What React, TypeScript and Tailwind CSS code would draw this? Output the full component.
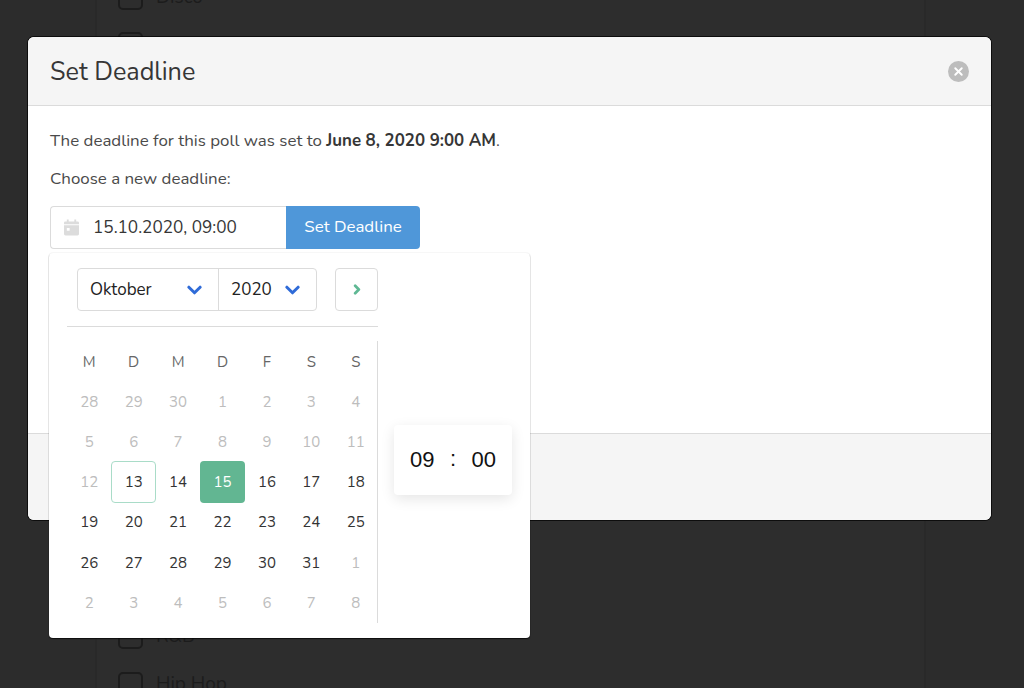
import React from 'react';
import { X } from 'lucide-react';

const weekDays = ['M', 'D', 'M', 'D', 'F', 'S', 'S'];

// [label, muted]
const days: [number, boolean][] = [
  [28, true], [29, true], [30, true], [1, true], [2, true], [3, true], [4, true],
  [5, true], [6, true], [7, true], [8, true], [9, true], [10, true], [11, true],
  [12, true], [13, false], [14, false], [15, false], [16, false], [17, false], [18, false],
  [19, false], [20, false], [21, false], [22, false], [23, false], [24, false], [25, false],
  [26, false], [27, false], [28, false], [29, false], [30, false], [31, false], [1, true],
  [2, true], [3, true], [4, true], [5, true], [6, true], [7, true], [8, true],
];

function Chevron({ className }: { className: string }) {
  return (
    <svg viewBox="0 0 16 10" className={className} fill="none" stroke="currentColor" strokeWidth="3.2" strokeLinecap="round" strokeLinejoin="round">
      <path d="M2 2l6 6 6-6" />
    </svg>
  );
}

function CalendarIcon() {
  return (
    <svg viewBox="0 0 16 17" className="w-[15px] h-[17px] text-[#dcdcdc]" fill="currentColor">
      <path d="M3 0h2v2h6V0h2v2h1.5A1.5 1.5 0 0 1 16 3.500V5H0V3.500A1.500 1.500 0 0 1 1.500 2H3z" />
      <path fillRule="evenodd" d="M0 6h16v9.500a1.500 1.500 0 0 1-1.500 1.500h-13A1.500 1.500 0 0 1 0 15.500zM3 9v3h3V9z" />
    </svg>
  );
}

function ListRow({ label }: { label?: string }) {
  return (
    <div className="flex items-center gap-[13px] h-[25px] leading-[25px]">
      <span className="w-[25px] h-[25px] rounded-[5px] border-2 border-[#1c1c1c]" />
      {label && <span>{label}</span>}
    </div>
  );
}

function Background() {
  return (
    <div className="ml-[95px] mr-[98px] h-full border-x-2 border-[#292929] bg-[#2d2d2d] pl-[21px] flex flex-col justify-between text-[#1c1c1c] text-[19px]">
      <div className="flex flex-col gap-[22px] -mt-[15px]">
        <ListRow label="Disco" />
        <ListRow />
      </div>
      <div className="flex flex-col gap-[23px] -mb-[9px]">
        <ListRow label="R&B" />
        <ListRow label="Hip Hop" />
      </div>
    </div>
  );
}

function DatePicker() {
  return (
    <div className="absolute left-[21px] top-[216px] w-[481px] h-[385px] bg-white rounded-[4px] shadow-[0_1px_1px_rgba(0,0,0,0.7),0_0_0_1px_rgba(0,0,0,0.03)] flex">
      <div className="w-[329px] pl-[18px] pt-[15px] shrink-0">
        <div className="pl-[10px] flex h-[43px]">
          <div className="flex w-[240px] rounded-[4px] border border-[#dbdbdb]">
            <div className="w-[141px] border-r border-[#dbdbdb] flex items-center justify-between pl-[12px] pr-[16px] text-[17px] text-[#222]">
              <span>Oktober</span>
              <Chevron className="w-[15px] h-[10px] text-[#2f6bd8]" />
            </div>
            <div className="flex-1 flex items-center justify-between pl-[12px] pr-[16px] text-[17px] text-[#222]">
              <span>2020</span>
              <Chevron className="w-[15px] h-[10px] text-[#2f6bd8]" />
            </div>
          </div>
          <div className="ml-[18px] w-[43px] rounded-[4px] border border-[#dbdbdb] flex items-center justify-center">
            <svg viewBox="0 0 8 12" className="w-[8px] h-[11px] text-[#5fb894]" fill="none" stroke="currentColor" strokeWidth="3" strokeLinecap="round" strokeLinejoin="round">
              <path d="M2 2l4 4-4 4" />
            </svg>
          </div>
        </div>
        <div className="mt-[15px] border-t border-[#dbdbdb] w-[311px]" />
        <div className="mt-[14px] w-[311px] h-[282px] pt-[1px] border-r border-[#dbdbdb] text-[15px]">
          <div className="grid grid-cols-7 w-[311px] text-[#666] h-[40px] items-center">
            {weekDays.map((d, i) => (
              <span key={i} className="text-center">{d}</span>
            ))}
          </div>
          <div className="grid grid-cols-7 w-[311px] auto-rows-[40.2px]">
            {days.map(([d, muted], i) => (
              <div
                key={i}
                className={
                  'flex items-center justify-center rounded-[4px] ' +
                  (muted ? 'text-[#bdbdbd] ' : 'text-[#333] ') +
                  (i === 15 ? 'border border-[#a9dcc8] -mt-[1px] ' : '') +
                  (i === 17 ? 'bg-[#62b692] text-white -mt-[1px] ' : '')
                }
              >
                {d}
              </div>
            ))}
          </div>
        </div>
      </div>
      <div className="ml-[16px] mt-[172px] w-[118px] h-[70px] pb-[2px] rounded-[4px] bg-white shadow-[0_4px_14px_rgba(0,0,0,0.1)] flex items-center justify-center gap-[15.5px] font-['Liberation_Sans',sans-serif] text-[22px] text-[#111]">
        <span>09</span>
        <span className="-mt-[2px]">:</span>
        <span>00</span>
      </div>
    </div>
  );
}

export default function App() {
  return (
    <div className="relative w-[1024px] h-[688px] overflow-hidden bg-[#2c2c2c] font-['Nunito','Lato',sans-serif]">
      <Background />
      <div className="absolute left-[28px] top-[37px] w-[963px] h-[483px] rounded-[6px] bg-white shadow-[0_0_0_1px_rgba(0,0,0,0.7)] flex flex-col">
        <div className="h-[69px] shrink-0 rounded-t-[6px] bg-[#f5f5f5] border-b border-[#dbdbdb] flex items-center justify-between pl-[22px] pr-[22px]">
          <h1 className="text-[25.2px] pt-[4px] text-[#363636]">Set Deadline</h1>
          <div className="w-[21px] h-[21px] rounded-full bg-[#bdbdbd] flex items-center justify-center">
            <X className="w-[13px] h-[13px] text-white" strokeWidth={3.5} />
          </div>
        </div>
        <div className="flex-1 px-[22px] pt-[24px] text-[16.9px] text-[#4a4a4a]">
          <p className="leading-[22px]">
            The deadline for this poll was set to <strong className="font-bold text-[#363636]">June 8, 2020 9:00 AM</strong>.
          </p>
          <p className="mt-[16px] leading-[22px]">Choose a new deadline:</p>
          <div className="mt-[16px] flex h-[43px] w-[370px]">
            <div className="w-[236px] rounded-l-[4px] border border-[#dbdbdb] border-r-0 flex items-center pl-[13px] text-[#363636]">
              <CalendarIcon />
              <span className="ml-[14px] text-[17.2px]">15.10.2020, 09:00</span>
            </div>
            <div className="flex-1 rounded-r-[4px] bg-[#4f97d9] text-white flex items-center justify-center pb-[2px]">Set Deadline</div>
          </div>
        </div>
        <div className="h-[87px] shrink-0 rounded-b-[6px] bg-[#f5f5f5] border-t border-[#dbdbdb]" />
        <DatePicker />
      </div>
    </div>
  );
}
